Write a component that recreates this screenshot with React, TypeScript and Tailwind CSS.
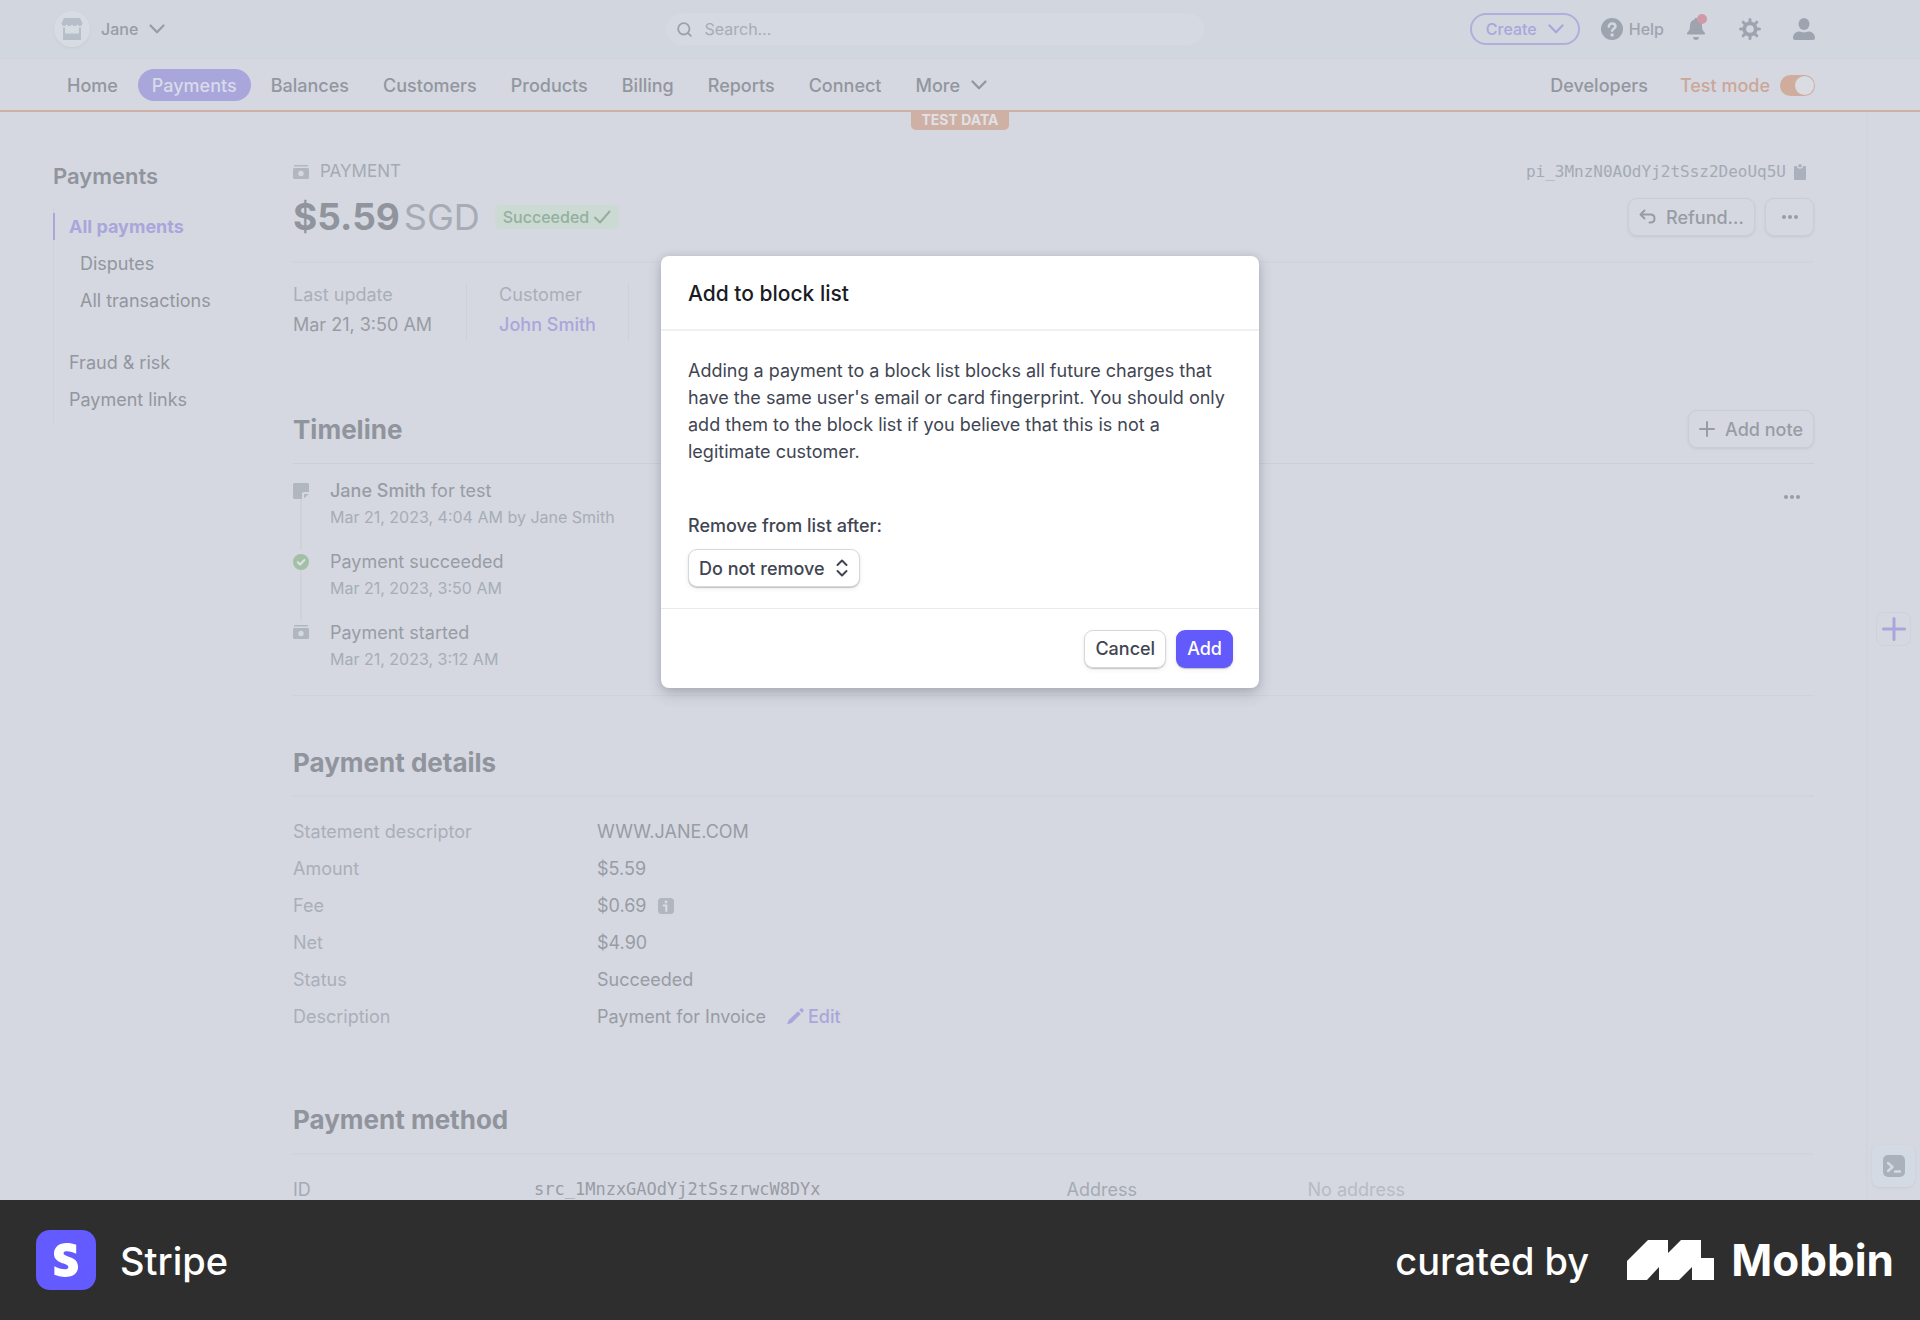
import { useState } from "react";
import type { ReactNode } from "react";
import { FaStripeS } from "react-icons/fa";
import { Plus, Search } from "lucide-react";

const navItems = [
  "Home",
  "Payments",
  "Balances",
  "Customers",
  "Products",
  "Billing",
  "Reports",
  "Connect",
];

const timeline = [
  {
    icon: <NoteIcon />,
    title: (
      <>
        <span className="font-medium">Jane Smith</span> for test
      </>
    ),
    meta: "Mar 21, 2023, 4:04 AM by Jane Smith",
  },
  {
    icon: <CheckCircleIcon />,
    title: "Payment succeeded",
    meta: "Mar 21, 2023, 3:50 AM",
  },
  {
    icon: <CashIcon />,
    title: "Payment started",
    meta: "Mar 21, 2023, 3:12 AM",
  },
];

/* ---------------- PAGE ---------------- */

export default function App() {
  return (
    <div className="flex h-screen flex-col bg-[#2e2e2e] font-['Inter','Liberation_Sans',sans-serif] text-[18px] text-[#989ca5]">
      <div className="relative flex min-h-0 flex-1 flex-col overflow-hidden bg-[#d5d8e0]">
        <TopBar />
        <NavBar />
        <div className="flex min-h-0 flex-1">
          <Sidebar />
          <main className="min-w-0 flex-1 pr-[52px] pt-12">
            <PaymentHeader />
            <Timeline />
            <PaymentDetails />
            <PaymentMethod />
          </main>
          <Rail />
        </div>
        <BlockListDialog />
      </div>
      <Footer />
    </div>
  );
}

/* ---------------- HEADER ---------------- */

function TopBar() {
  return (
    <header className="flex h-[59px] shrink-0 items-center justify-between border-b border-[#d0d4d9] bg-[#d2d6df] pl-[54px] pr-[105px] text-base font-medium">
      <button className="flex flex-1 items-center gap-[11px]">
        <span className="flex size-9 items-center justify-center rounded-full bg-[#d7dce3] shadow-sm shadow-[#c8cdd6]">
          <ShopIcon />
        </span>
        <span>Jane</span>
        <ChevronIcon />
      </button>

      <label className="flex h-8 w-[538px] items-center gap-3 rounded-full bg-[#d5d9e1] px-[10px] text-[#a6acb7]">
        <Search className="size-[17px] text-[#9ca2ad]" strokeWidth={2.6} />
        <input
          type="search"
          aria-label="Search"
          placeholder="Search…"
          className="min-w-0 flex-1 bg-transparent font-normal outline-none placeholder:text-[#a6acb7]"
        />
      </label>

      <div className="flex flex-1 items-center justify-end text-[#9ea4af]">
        <button className="flex h-8 items-center gap-[11px] rounded-full border-2 border-[#b1aedb] px-[14px] text-[#a9a6dc]">
          Create
          <ChevronIcon />
        </button>
        <button className="ml-[21px] flex items-center gap-[6px]">
          <HelpIcon />
          Help
        </button>
        <button aria-label="Notifications" className="relative ml-[23px]">
          <BellIcon />
          <span className="absolute -top-1 left-[10px] size-[10px] rounded-full bg-[#cf9aa6]" />
        </button>
        <button aria-label="Settings" className="ml-[34px]">
          <GearIcon />
        </button>
        <button aria-label="Account" className="ml-8">
          <PersonIcon />
        </button>
      </div>
    </header>
  );
}

function NavBar() {
  const [testMode, setTestMode] = useState(true);

  return (
    <nav className="relative flex h-[53px] shrink-0 items-center justify-between border-b-2 border-[#cfb0a4] pl-[53px] pr-[105px] pt-px font-medium text-[#92969f]">
      <div className="flex items-center gap-[6px]">
        {navItems.map((item) => (
          <a
            key={item}
            href="#"
            className={`flex h-8 items-center rounded-full px-[14px] ${
              item === "Payments" ? "bg-[#a9a6dc] text-[#d9dbe8]" : ""
            }`}
          >
            {item}
          </a>
        ))}
        <button className="flex h-8 items-center gap-[11px] px-[14px]">
          More
          <ChevronIcon />
        </button>
      </div>

      <div className="flex items-center gap-8">
        <a href="#">Developers</a>
        <label className="flex items-center gap-[10px] text-[#cba798]">
          Test mode
          <input
            type="checkbox"
            role="switch"
            checked={testMode}
            onChange={(e) => setTestMode(e.target.checked)}
            className="flex h-[21px] w-[35px] appearance-none items-center justify-start rounded-full bg-[#cfac9b] px-px before:size-[19px] before:rounded-full before:bg-[#d9dce3] before:content-[''] checked:justify-end"
          />
        </label>
      </div>

      <span className="absolute left-1/2 top-[51px] h-5 w-[98px] -translate-x-1/2 rounded-b-[5px] bg-[#cfb0a4] text-center text-[14px] font-bold leading-5 text-[#dfe1e6]">
        TEST DATA
      </span>
    </nav>
  );
}

function Sidebar() {
  return (
    <aside className="w-[293px] shrink-0 pl-[53px] pt-[50px]">
      <h2 className="text-[22px] font-semibold leading-[28px] text-[#90949d]">
        Payments
      </h2>
      <ul className="mt-[18px] h-[218px] border-l border-[#cfd3d9] text-[#92969f]">
        <li className="flex h-[37px] items-center">
          <a
            href="#"
            className="-ml-px border-l-2 border-[#a9a6dc] pl-[14px] font-bold text-[#a9a6dc]"
          >
            All payments
          </a>
        </li>
        <li className="flex h-[37px] items-center pl-[26px]">
          <a href="#">Disputes</a>
        </li>
        <li className="flex h-[37px] items-center pl-[26px]">
          <a href="#">All transactions</a>
        </li>
        <li className="mt-[25px] flex h-[37px] items-center pl-[15px]">
          <a href="#">Fraud &amp; risk</a>
        </li>
        <li className="flex h-[37px] items-center pl-[15px]">
          <a href="#">Payment links</a>
        </li>
      </ul>
    </aside>
  );
}

function Rail() {
  return (
    <aside className="flex w-[54px] shrink-0 flex-col items-center border-l-2 border-[#d2d6da] pr-px">
      <button
        aria-label="Add shortcut"
        className="mt-[500px] flex h-[34px] w-[35px] items-center justify-center rounded-lg border border-[#ced2d9] text-[#a9a6dc]"
      >
        <Plus className="size-9 shrink-0" strokeWidth={2} />
      </button>
      <button
        aria-label="Open shell"
        className="mb-[13px] mt-auto flex h-[42px] w-[43px] items-center justify-center rounded-lg bg-[#d4dae3] shadow-sm shadow-[#c8cdd6]"
      >
        <ShellIcon />
      </button>
    </aside>
  );
}

/* ---------------- PAYMENT ---------------- */

function PaymentHeader() {
  return (
    <section>
      <div className="flex h-6 items-center justify-between text-[#a4aab5]">
        <div className="flex items-center gap-[11px] text-[17px]">
          <CashIcon />
          PAYMENT
        </div>
        <div className="flex items-center gap-2 pr-[8px] font-['DejaVu_Sans_Mono',monospace] text-base">
          pi_3MnzN0AOdYj2tSsz2DeoUq5U
          <ClipboardIcon />
        </div>
      </div>

      <div className="mt-[13px] flex h-10 items-center justify-between">
        <div className="flex items-center">
          <h1 className="flex gap-1 text-[37px] font-bold leading-10 text-[#90949d]">
            $5.59
            <span className="text-[36px] font-normal text-[#a6abb5]">SGD</span>
          </h1>
          <span className="ml-[15px] flex h-6 items-center gap-1 rounded-[5px] bg-[#cbdad3] px-2 text-base font-medium text-[#94b09d]">
            Succeeded
            <svg viewBox="0 0 18 16" className="h-4 w-[18px]" fill="none">
              <path
                d="M2 8.5l5 5L16.5 2.5"
                stroke="currentColor"
                strokeWidth="2"
                strokeLinecap="round"
                strokeLinejoin="round"
              />
            </svg>
          </span>
        </div>
        <div className="flex gap-[10px]">
          <GhostButton icon={<RefundIcon />}>Refund…</GhostButton>
          <button
            aria-label="More actions"
            className="flex h-[38px] w-[49px] items-center justify-center rounded-[9px] border border-[#c9cdd4] shadow-sm shadow-[#c4c9d2]"
          >
            <DotsIcon />
          </button>
        </div>
      </div>

      <dl className="mt-6 flex border-t-2 border-[#d1d5d9] pt-5 leading-6">
        <div className="h-[58px] border-r border-[#ced2d7] pr-[34px]">
          <dt className="text-[#a9afba]">Last update</dt>
          <dd className="mt-[6px]">Mar 21, 3:50 AM</dd>
        </div>
        <div className="h-[58px] border-r border-[#ced2d7] px-8">
          <dt className="text-[#a9afba]">Customer</dt>
          <dd className="mt-[6px]">
            <a href="#" className="font-medium text-[#a9a6dc]">
              John Smith
            </a>
          </dd>
        </div>
      </dl>
    </section>
  );
}

function Timeline() {
  return (
    <section className="mt-[69px] border-b border-[#cfd3d8] pb-6">
      <div className="flex h-[54px] items-start justify-between border-b border-[#cbcfd5]">
        <div className="pt-[3px]">
          <SectionTitle>Timeline</SectionTitle>
        </div>
        <GhostButton icon={<PlusIcon />}>Add note</GhostButton>
      </div>

      <div className="flex items-start justify-between pt-[15px]">
        <ol>
          {timeline.map((event, i) => (
            <li key={event.meta} className="flex gap-[21px]">
              <div className="flex w-4 flex-col items-center pt-1 text-[#b1b7c1]">
                {event.icon}
                {i < timeline.length - 1 && (
                  <span className="w-[2px] flex-1 bg-[#ced2d9]" />
                )}
              </div>
              <div
                className={
                  i < timeline.length - 1 ? "pb-[21px] leading-6" : "leading-6"
                }
              >
                <p>{event.title}</p>
                <p className="mt-[2px] text-base leading-6 text-[#a6adb8]">
                  {event.meta}
                </p>
              </div>
            </li>
          ))}
        </ol>
        <button
          aria-label="Note actions"
          className="mr-[14px] flex h-9 items-center"
        >
          <DotsIcon />
        </button>
      </div>
    </section>
  );
}

function PaymentDetails() {
  return (
    <section className="mt-[50px]">
      <SectionTitle>Payment details</SectionTitle>
      <dl className="mt-[15px] border-t-2 border-[#d1d5d9] pt-4">
        <DetailRow label="Statement descriptor">WWW.JANE.COM</DetailRow>
        <DetailRow label="Amount">$5.59</DetailRow>
        <DetailRow label="Fee">
          $0.69
          <InfoIcon />
        </DetailRow>
        <DetailRow label="Net">$4.90</DetailRow>
        <DetailRow label="Status">Succeeded</DetailRow>
        <DetailRow label="Description">
          Payment for Invoice
          <button className="ml-[10px] flex items-center gap-1 font-medium text-[#a9a6dc]">
            <PencilIcon />
            Edit
          </button>
        </DetailRow>
      </dl>
    </section>
  );
}

function PaymentMethod() {
  return (
    <section className="mt-[68px]">
      <SectionTitle>Payment method</SectionTitle>
      <dl className="mt-4 grid grid-cols-2 gap-[26px] border-t-2 border-[#d1d5d9] pt-4">
        <div className="flex h-[37px] items-center">
          <dt className="w-[241px] text-[#a4aab5]">ID</dt>
          <dd className="font-['DejaVu_Sans_Mono',monospace] text-[17px]">
            src_1MnzxGAOdYj2tSszrwcW8DYx
          </dd>
        </div>
        <div className="flex h-[37px] items-center">
          <dt className="w-[241px] text-[#a4aab5]">Address</dt>
          <dd className="text-[#b6bbc5]">No address</dd>
        </div>
      </dl>
    </section>
  );
}

function SectionTitle({ children }: { children: ReactNode }) {
  return (
    <h2 className="text-[26px] font-bold leading-[34px] text-[#90949d]">
      {children}
    </h2>
  );
}

function DetailRow({
  label,
  children,
}: {
  label: string;
  children: ReactNode;
}) {
  return (
    <div className="flex h-[37px] items-center">
      <dt className="w-[304px] text-[#a9afba]">{label}</dt>
      <dd className="flex items-center gap-[11px]">{children}</dd>
    </div>
  );
}

function GhostButton({
  icon,
  children,
}: {
  icon: ReactNode;
  children: ReactNode;
}) {
  return (
    <button className="flex h-[38px] items-center gap-[10px] rounded-[9px] border border-[#c9cdd4] px-[10px] font-medium shadow-sm shadow-[#c4c9d2]">
      {icon}
      {children}
    </button>
  );
}

/* ---------------- DIALOG ---------------- */

function BlockListDialog() {
  const [duration, setDuration] = useState("never");

  return (
    <div className="absolute inset-0 flex items-start justify-center pt-64">
      <div
        role="dialog"
        aria-modal="true"
        aria-labelledby="block-title"
        className="w-[598px] rounded-lg bg-white text-[#414552] shadow-[0_6px_14px_rgba(60,66,87,0.25),0_0_6px_rgba(60,66,87,0.12)]"
      >
        <div className="flex h-[75px] items-center border-b-2 border-[#f0f1f2] px-[27px] pt-[2px]">
          <h2
            id="block-title"
            className="text-[21px] font-medium text-[#1a1b25]"
          >
            Add to block list
          </h2>
        </div>

        <div className="px-[27px] pb-[21px] pt-[26px]">
          <p className="leading-[27px]">
            Adding a payment to a block list blocks all future charges that have
            the same user's email or card fingerprint. You should only add them
            to the block list if you believe that this is not a legitimate
            customer.
          </p>
          <label
            htmlFor="duration"
            className="mt-[47px] block font-medium leading-[27px]"
          >
            Remove from list after:
          </label>
          <div className="relative mt-[10px] w-fit">
            <select
              id="duration"
              value={duration}
              onChange={(e) => setDuration(e.target.value)}
              className="block h-[38px] appearance-none rounded-[9px] border border-[#d5d8de] bg-white pl-[10px] pr-[34px] font-medium shadow-[0_1px_1px_rgba(0,0,0,0.2),0_2px_5px_rgba(60,66,87,0.08)]"
            >
              <option value="never">Do not remove</option>
              <option value="week">7 days</option>
              <option value="month">30 days</option>
            </select>
            <SortIcon />
          </div>
        </div>

        <div className="flex h-20 items-center justify-end gap-[10px] border-t border-[#e8eaed] px-[26px] font-medium">
          <button className="h-[38px] rounded-[9px] border border-[#d5d8de] px-[10px] shadow-[0_1px_1px_rgba(0,0,0,0.2),0_2px_5px_rgba(60,66,87,0.08)]">
            Cancel
          </button>
          <button className="h-[38px] rounded-[9px] bg-[#625afa] px-[11px] text-white shadow-[0_1px_1px_rgba(0,0,0,0.2),0_2px_5px_rgba(60,66,87,0.08)]">
            Add
          </button>
        </div>
      </div>
    </div>
  );
}

/* ---------------- FOOTER ---------------- */

function Footer() {
  return (
    <footer className="flex h-[120px] shrink-0 items-center justify-between pl-9 pr-[26px] text-white">
      <div className="flex items-center gap-6">
        <span className="flex size-[60px] items-center justify-center rounded-[14px] bg-[#635bff]">
          <FaStripeS className="size-[34px]" />
        </span>
        <span className="pt-[2px] text-[38px] font-medium">Stripe</span>
      </div>
      <div className="flex items-center">
        <span className="pt-[2px] text-[38px] font-medium">curated by</span>
        <svg
          viewBox="0 0 87 40"
          className="ml-[38px] h-10 w-[87px]"
          fill="currentColor"
        >
          <path d="M0 21 L21 0 H41 V13 L54 0 H74 V18 H87 V40 H65 V27 L52 40 H32 V27 L20 40 H0 Z" />
        </svg>
        <span className="ml-[17px] text-[44px] font-bold">Mobbin</span>
      </div>
    </footer>
  );
}

/* ---------------- ICONS ---------------- */

function ChevronIcon() {
  return (
    <svg
      viewBox="0 0 16 10"
      className="h-[10px] w-4"
      fill="none"
      stroke="currentColor"
      strokeWidth="2.2"
      strokeLinecap="round"
      strokeLinejoin="round"
    >
      <path d="M1.500 1.500L8 8.300l6.500-6.800" />
    </svg>
  );
}

function SortIcon() {
  return (
    <svg
      viewBox="0 0 12 18"
      className="pointer-events-none absolute right-3 top-[10px] h-[18px] w-3"
      fill="none"
      stroke="currentColor"
      strokeWidth="2"
      strokeLinecap="round"
      strokeLinejoin="round"
    >
      <path d="M1.500 6L6 1.500 10.500 6M1.500 12L6 16.500l4.500-4.500" />
    </svg>
  );
}

function PlusIcon() {
  return (
    <svg
      viewBox="0 0 16 16"
      className="size-4"
      fill="none"
      stroke="currentColor"
      strokeWidth="2"
      strokeLinecap="round"
    >
      <path d="M8 1v14M1 8h14" />
    </svg>
  );
}

function ShopIcon() {
  return (
    <svg viewBox="0 0 22 22" className="size-[22px] text-[#b8bec8]" fill="currentColor">
      <path d="M3 0h16l2.500 5c0 2-1 3-2.500 3-1.300 0-2-.700-2.600-1.500C15.700 7.400 15 8 13.700 8S11.600 7.400 11 6.500C10.400 7.400 9.600 8 8.300 8S6.300 7.400 5.600 6.500C5 7.300 4.300 8 3 8 1.500 8 .500 7 .500 5z" />
      <path d="M2 9.500h2V14c0 1 .500 1.500 1.500 1.500h11c1 0 1.500-.500 1.500-1.500V9.500h2V22H2z" />
    </svg>
  );
}

function HelpIcon() {
  return (
    <svg viewBox="0 0 22 22" className="size-[22px]" fill="none">
      <circle cx="11" cy="11" r="11" fill="currentColor" />
      <path
        d="M7.800 8.600c0-1.900 1.400-3.100 3.300-3.100s3.300 1.100 3.300 2.900c0 2.300-3.200 2.300-3.200 4.400"
        stroke="#d2d6df"
        strokeWidth="2.600"
        strokeLinecap="round"
      />
      <circle cx="11.100" cy="17" r="1.800" fill="#d2d6df" />
    </svg>
  );
}

function BellIcon() {
  return (
    <svg viewBox="0 0 18 22" className="h-[22px] w-[18px]" fill="currentColor">
      <path d="M7.500 1.500C7.500.500 8 0 9 0s1.500.500 1.500 1.500C13.500 2.300 15 4.600 15 7.500c0 4 1 5.500 2.600 7 .700.700.400 2-.600 2H1c-1 0-1.300-1.300-.600-2C2 13 3 11.500 3 7.500c0-2.900 1.500-5.200 4.500-6zM6 19h6c0 1.700-1.300 3-3 3s-3-1.300-3-3z" />
    </svg>
  );
}

function GearIcon() {
  return (
    <svg viewBox="0 0 22 22" className="size-[22px]" fill="none" stroke="currentColor">
      <circle cx="11" cy="11" r="5.700" strokeWidth="3.800" />
      <path
        d="M11 4V1.500M11 20.500V18M4 11H1.500M20.500 11H18M6 6L4.200 4.200M17.800 17.800L16 16M6 16l-1.800 1.800M17.800 4.200L16 6"
        strokeWidth="3"
        strokeLinecap="round"
      />
    </svg>
  );
}

function PersonIcon() {
  return (
    <svg viewBox="0 0 22 22" className="size-[22px]" fill="currentColor">
      <ellipse cx="11" cy="6" rx="5.500" ry="6" />
      <path d="M0 20c0-4 3-6.500 6.500-6.500 1.500 0 2.500 1 4.500 1s3-1 4.500-1C19 13.500 22 16 22 20c0 1.300-.600 2-2 2H2c-1.400 0-2-.700-2-2z" />
    </svg>
  );
}

function CashIcon() {
  return (
    <svg viewBox="0 0 16 14" className="h-[14px] w-4 shrink-0 text-[#b1b7c1]" fill="currentColor">
      <path d="M2 0h12c.600 0 1 .400 1 1v.500H1V1c0-.600.400-1 1-1z" />
      <path
        fillRule="evenodd"
        d="M1.500 3h13c.900 0 1.500.600 1.500 1.500v8c0 .900-.600 1.500-1.500 1.500h-13C.600 14 0 13.400 0 12.500v-8C0 3.600.600 3 1.500 3zM8 5.800a2.700 2.700 0 100 5.400 2.700 2.700 0 000-5.400z"
      />
    </svg>
  );
}

function NoteIcon() {
  return (
    <svg viewBox="0 0 16 16" className="size-4 shrink-0" fill="currentColor">
      <path d="M1.500 0h13c.900 0 1.500.600 1.500 1.500V9h-5c-1.200 0-2 .800-2 2v5H1.500C.600 16 0 15.400 0 14.500v-13C0 .600.600 0 1.500 0z" />
      <path d="M11 15.500V12c0-.600.400-1 1-1h3.500z" />
    </svg>
  );
}

function CheckCircleIcon() {
  return (
    <svg viewBox="0 0 16 16" className="size-4 shrink-0" fill="none">
      <circle cx="8" cy="8" r="8" fill="#a3bfa5" />
      <path
        d="M4.800 8.200l2.300 2.300 4.300-4.500"
        stroke="#dde2e4"
        strokeWidth="2"
        strokeLinecap="round"
        strokeLinejoin="round"
      />
    </svg>
  );
}

function ClipboardIcon() {
  return (
    <svg viewBox="0 0 12 16" className="h-4 w-3 text-[#abb1bc]" fill="currentColor">
      <path d="M1 2h2c0 1.700 1.200 2.800 3 2.800S9 3.700 9 2h2c.600 0 1 .400 1 1v12c0 .600-.400 1-1 1H1c-.600 0-1-.400-1-1V3c0-.600.400-1 1-1z" />
      <circle cx="6" cy="1.800" r="1.800" />
    </svg>
  );
}

function RefundIcon() {
  return (
    <svg
      viewBox="0 0 17 16"
      className="h-4 w-[17px]"
      fill="none"
      stroke="currentColor"
      strokeWidth="2"
      strokeLinecap="round"
      strokeLinejoin="round"
    >
      <path d="M5.500 1.500L1.500 5.500l4 4M2 5.500h9.500c2.400 0 4 1.700 4 4s-1.600 4-4 4h-1" />
    </svg>
  );
}

function DotsIcon() {
  return (
    <svg viewBox="0 0 16 4" className="h-1 w-4" fill="currentColor">
      <circle cx="2" cy="2" r="2" />
      <circle cx="8" cy="2" r="2" />
      <circle cx="14" cy="2" r="2" />
    </svg>
  );
}

function InfoIcon() {
  return (
    <svg viewBox="0 0 16 16" className="size-4" fill="none">
      <rect width="16" height="16" rx="3.500" fill="#b1b7c1" />
      <circle cx="8" cy="4" r="1.400" fill="#d9dce3" />
      <path d="M5.500 7.500H8.300V13" stroke="#d9dce3" strokeWidth="2" strokeLinecap="round" />
    </svg>
  );
}

function PencilIcon() {
  return (
    <svg viewBox="0 0 17 17" className="size-[17px]" fill="currentColor">
      <path d="M11 3.200l2.800 2.800L5 14.800.800 16.300c-.300.100-.600-.200-.500-.500L1.800 12zM12.200 2l1.300-1.300c.600-.600 1.400-.600 2 0l.800.800c.600.600.600 1.400 0 2L15 4.800z" />
    </svg>
  );
}

function ShellIcon() {
  return (
    <svg viewBox="0 0 22 22" className="size-[22px]" fill="none">
      <rect width="22" height="22" rx="5" fill="#abb1bb" />
      <path
        d="M5 8l4.500 4L5 16M12 16.500h5"
        stroke="#d4dae3"
        strokeWidth="2.400"
        strokeLinecap="round"
        strokeLinejoin="round"
      />
    </svg>
  );
}
